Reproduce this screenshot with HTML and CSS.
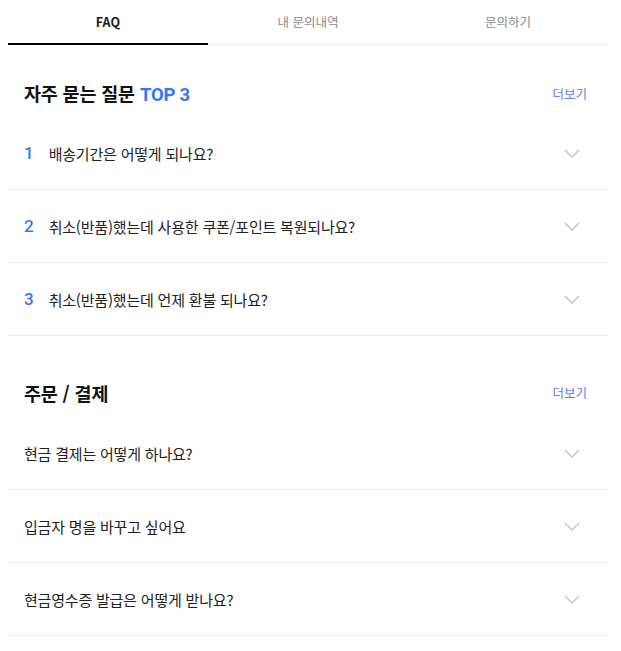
FILE: index.html
```html
<!DOCTYPE html>
<html lang="ko">
<head>
<meta charset="utf-8">
<link rel="stylesheet" href="styles.css">
</head>
<body>
<div class="page">
  <nav class="tabs">
    <div class="tab active">FAQ</div>
    <div class="tab">내 문의내역</div>
    <div class="tab">문의하기</div>
  </nav>

  <section class="section">
    <div class="sec-head">
      <h2 class="sec-title">자주 묻는 질문 <span class="accent">TOP 3</span></h2>
      <a class="more">더보기</a>
    </div>
    <ul class="list">
      <li class="item"><span class="num">1</span><span class="q">배송기간은 어떻게 되나요?</span><svg class="chev" viewBox="0 0 16 9"><path d="M1 1l7 7 7-7"/></svg></li>
      <li class="item"><span class="num">2</span><span class="q">취소(반품)했는데 사용한 쿠폰/포인트 복원되나요?</span><svg class="chev" viewBox="0 0 16 9"><path d="M1 1l7 7 7-7"/></svg></li>
      <li class="item"><span class="num">3</span><span class="q">취소(반품)했는데 언제 환불 되나요?</span><svg class="chev" viewBox="0 0 16 9"><path d="M1 1l7 7 7-7"/></svg></li>
    </ul>
  </section>

  <section class="section second">
    <div class="sec-head">
      <h2 class="sec-title">주문 / 결제</h2>
      <a class="more">더보기</a>
    </div>
    <ul class="list">
      <li class="item"><span class="q">현금 결제는 어떻게 하나요?</span><svg class="chev" viewBox="0 0 16 9"><path d="M1 1l7 7 7-7"/></svg></li>
      <li class="item"><span class="q">입금자 명을 바꾸고 싶어요</span><svg class="chev" viewBox="0 0 16 9"><path d="M1 1l7 7 7-7"/></svg></li>
      <li class="item"><span class="q">현금영수증 발급은 어떻게 받나요?</span><svg class="chev" viewBox="0 0 16 9"><path d="M1 1l7 7 7-7"/></svg></li>
    </ul>
  </section>
</div>
</body>
</html>
```

FILE: styles.css
```css
* { box-sizing: border-box; }
html, body { margin: 0; padding: 0; background: #fff; }
body {
  padding: 0 8px;
  font-family: "Noto Sans CJK KR", "Noto Sans", sans-serif;
  color: #222;
}
.page { width: 600px; }

.tabs {
  display: flex;
  height: 45px;
  border-bottom: 1px solid #eee;
}
.tab {
  flex: 1;
  display: flex;
  align-items: center;
  justify-content: center;
  font-size: 12.5px;
  color: #888;
  padding-bottom: 1px;
  margin-bottom: -1px;
  border-bottom: 2px solid transparent;
}
.tab.active {
  color: #222;
  font-weight: 700;
  border-bottom-color: #000;
}

.section.second { margin-top: 9px; }

.sec-head {
  display: flex;
  align-items: center;
  justify-content: space-between;
  height: 72px;
  padding: 24px 21px 0 16px;
}
.section.second .sec-head { padding-top: 23px; }
.sec-title {
  margin: 0;
  font-size: 18.5px;
  font-weight: 700;
  color: #111;
  letter-spacing: -0.2px;
}
.accent {
  color: #3477f6;
  font-family: "Roboto", "Noto Sans CJK KR", sans-serif;
}
.more {
  font-size: 12.5px;
  color: #6a79ee;
  text-decoration: none;
}

.list { list-style: none; margin: 0; padding: 0; }
.item {
  display: flex;
  align-items: center;
  height: 73px;
  padding: 0 28px 0 16px;
  border-bottom: 1px solid #eaeaea;
  font-size: 15px;
  color: #222;
}
.num {
  font-family: "Roboto", sans-serif;
  font-size: 17px;
  font-weight: 500;
  color: #3477f6;
  margin-right: 15px;
}
.q { flex: 1; letter-spacing: -0.2px; }
.chev {
  width: 16px;
  height: 9px;
  fill: none;
  stroke: #c8c8c8;
  stroke-width: 1.6;
}
```
